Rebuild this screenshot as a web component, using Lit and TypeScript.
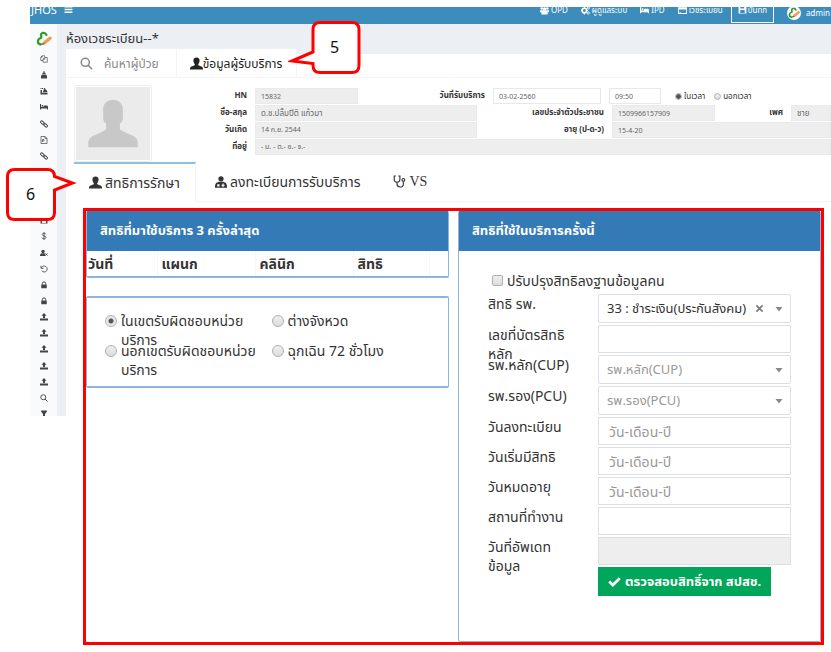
import { LitElement, html, css, svg, nothing } from "lit";
import { customElement, property } from "lit/decorators.js";

const glyphs: Record<string, unknown> = {
  user: svg`<path d="M8 .5c2.400 0 3.800 1.500 3.800 3.900 0 2-.8 3.500-1.700 4.400v.9c.6.8 2.600 1.300 4.100 2 1.400.6 1.800 1.200 1.800 3.800H0c0-2.600.4-3.200 1.800-3.800 1.500-.7 3.500-1.200 4.100-2v-.9C5 7.900 4.200 6.400 4.200 4.400 4.200 2 5.600.5 8 .5z"/>`,
  doctor: svg`<circle cx="8" cy="3.800" r="3.500"/><path fill-rule="evenodd" d="M5 7.500h6l3 1.500c1.500 1 2 3 2 6.500H0C0 12 .5 10 2 9zM3 11v3h3v-3zm7-1v1.500H8.500V13H10v1.500h1.500V13H13v-1.500h-1.500V10z"/>`,
  steth: svg`<path fill="none" stroke="currentColor" stroke-width="1.400" d="M3.500 1.200H1.500V5c0 2.500 1.500 4 3.500 4s3.500-1.500 3.500-4V1.200h-2M5 9v2.500c0 2 1.400 3.300 3.700 3.300s4-1.300 4-3.500V8"/><circle cx="12.700" cy="6" r="1.700" fill="none" stroke="currentColor" stroke-width="1.400"/>`,
  search: svg`<path fill="none" stroke="currentColor" stroke-width="2" stroke-linecap="round" d="M10.400 10.400l4 4"/><circle cx="6.500" cy="6.500" r="5" fill="none" stroke="currentColor" stroke-width="1.800"/>`,
  copy: svg`<path fill="none" stroke="currentColor" stroke-width="1.300" d="M9.500 4V1.500h-5l-3 3v6.500H6M4.500 1.500v3h-3M9.500 5h5v9.500H6V8.500zM9.500 5v3.500H6"/>`,
  nurse: svg`<path d="M7 0h2v3l2 1v2H5V4l2-1zM4 7h8l2 3v5H2v-5z"/>`,
  chair: svg`<path d="M1 2h2v2H1zM4 2h2v2H4zM1 6h3v6h11v3H1zM8 2h2l1 3 3 2 1 4H5l2-4z"/>`,
  bed: svg`<path d="M0 2h2v6h5V5h6c2 0 3 1 3 3v5h-2v-2H2v2H0z"/><circle cx="4.500" cy="5.800" r="1.600"/>`,
  link: svg`<g fill="none" stroke="currentColor" stroke-width="2"><rect x="1" y="3" width="8" height="4.500" rx="2.200" transform="rotate(40 5 5)"/><rect x="7" y="8.500" width="8" height="4.500" rx="2.200" transform="rotate(40 11 11)"/></g>`,
  file: svg`<path fill="none" stroke="currentColor" stroke-width="1.400" d="M2 1h8l4 4v10H2zM10 1v4h4M5 12V7h3v3H5"/>`,
  save: svg`<path fill-rule="evenodd" d="M1 1h11l3 3v11H1zm3 1v4h7V2zm0 7v5h8V9z"/>`,
  dollar: svg`<path fill="none" stroke="currentColor" stroke-width="1.600" d="M12 4.500C11.500 3 10 2.600 8 2.600c-2.200 0-3.600.9-3.600 2.500C4.400 8.700 12 7 12 10.800c0 1.700-1.600 2.700-4 2.700-2.300 0-3.700-.8-4.200-2.400M8 0v16"/>`,
  userx: svg`<circle cx="6" cy="5" r="3.500"/><path d="M0 14c0-4 1.500-5.500 3.500-5.500h5C10 8.500 11 10 11 14z"/><path fill="none" stroke="currentColor" stroke-width="2" d="M11 9l4 4m0-4l-4 4"/>`,
  undo: svg`<path fill="none" stroke="currentColor" stroke-width="1.700" d="M2 1.500v5h5M2.500 6C4 3 6 2 8.500 2a6 6 0 1 1-5 9.500"/>`,
  lock: svg`<path d="M2.500 7h11v7.500h-11z"/><path fill="none" stroke="currentColor" stroke-width="2" d="M4.700 7V5a3.300 3.300 0 0 1 6.600 0v2"/>`,
  upload: svg`<path d="M8 0l5 5.500H10V10H6V5.500H3zM0 11h16v4H0z"/>`,
  filter: svg`<path d="M2 1h12v2L10 8v7l-4-2.500V8L2 3z"/>`,
  bars: svg`<path d="M1 2h14v2.600H1zM1 6.700h14v2.600H1zM1 11.400h14V14H1z"/>`,
  group: svg`<circle cx="8" cy="5" r="3"/><circle cx="3" cy="4.500" r="2.300"/><circle cx="13" cy="4.500" r="2.300"/><path d="M0 7.500h16V11h-2.500v4h-11v-4H0z"/>`,
  gears: svg`<circle cx="6" cy="8" r="4" fill="none" stroke="currentColor" stroke-width="3"/><path d="M5 1h2v3H5zM5 12h2v3H5zM0 7h3v2H0zM9 7h3v2H9z"/><circle cx="13" cy="3.500" r="2" fill="none" stroke="currentColor" stroke-width="1.500"/><circle cx="13" cy="12.500" r="2" fill="none" stroke="currentColor" stroke-width="1.500"/>`,
  card: svg`<path fill-rule="evenodd" d="M0 2h16v12H0zm1.500 4v6.500h13V6zm1 4.500V12H5v-1.500z"/>`,
  check: svg`<path fill="none" stroke="currentColor" stroke-width="3.400" d="M1.500 8l4.500 4.300L14.500 4"/>`,
  times: svg`<path fill="none" stroke="currentColor" stroke-width="2.800" d="M2.500 2.500l11 11m0-11l-11 11"/>`,
  caret: svg`<path d="M1 4h14l-7 9z"/>`,
  logo: svg`<path fill="none" stroke="#2f9e23" stroke-width="2.200" stroke-linecap="round" d="M10.500 4C9 .8 4.500 1.500 5 4.600c.2 1.200.8 1.700 0 2.400C1.500 7.500.5 12.500 4.500 13.300"/><path fill="none" stroke="#f19b55" stroke-width="3.400" stroke-linecap="round" d="M8.500 11.800l5.500-4.600"/><path fill="none" stroke="#2f9e23" stroke-width="1.500" d="M4.500 13.500l4-1"/>`,
};

@customElement("ui-icon")
class UiIcon extends LitElement {
  @property() name = "";
  static styles = css`
    :host { display: inline-flex; flex: none; width: 1em; height: 1em; }
    svg { width: 100%; height: 100%; fill: currentColor; }
  `;
  render() {
    return html`<svg viewBox="0 0 16 16" aria-hidden="true">${glyphs[this.name]}</svg>`;
  }
}

interface Row {
  id: string;
  label: unknown;
  kind: "select" | "text" | "date" | "readonly";
  value?: string;
}

@customElement("app-root")
class AppRoot extends LitElement {
  static styles = css`
    * { box-sizing: border-box; }
    :host {
      display: block;
      position: relative;
      padding: 7px 0 7px 30px;
      background: #fff;
      color: #333;
      font: 14px/19px "Noto Sans", "Noto Sans Thai", sans-serif;
      overflow: hidden;
    }
    a { color: inherit; text-decoration: none; }
    button, input, select { font: inherit; color: inherit; margin: 0; }
    button { border: 0; background: none; padding: 0; }
    h1, h2 { margin: 0; font-size: inherit; font-weight: inherit; }

    .topbar {
      display: flex;
      align-items: flex-end;
      height: 17px;
      overflow: hidden;
      background: #3c8dbc;
      color: #fff;
      font-size: 8px;
      line-height: 14px;
      white-space: nowrap;
    }
    .brand { font-size: 11px; margin: 0 7px 7px 1px; }
    .menu { display: flex; font-size: 9px; margin-bottom: 10px; }
    .toplinks { display: flex; align-items: flex-end; margin-left: auto; }
    .toplinks a { display: flex; align-items: center; gap: 2px; padding-bottom: 7px; margin-right: 13px; }
    .toplinks ui-icon { font-size: 9px; }
    .toplinks .save {
      height: 24px;
      margin: 0 13px 1px -5px;
      padding: 0 6px 5px;
      border: 1px solid #fff;
      align-items: flex-end;
      display: flex;
      gap: 1px;
    }
    .toplinks .save ui-icon { margin-bottom: 3px; }
    .toplinks .account { margin-right: 1px; gap: 5px; padding-bottom: 4px; }
    .badge { display: flex; padding: 1px; border-radius: 50%; background: #fff; }
    .toplinks .badge ui-icon { font-size: 12px; }

    .body { display: grid; grid-template-columns: 27px 9px minmax(0, 1fr); grid-template-rows: 30px auto; }
    .rail { grid-row: 1 / 3; height: 392px; overflow: hidden; background: #f9fafc; color: #444; }
    .rail .home { display: flex; justify-content: center; padding-top: 7px; font-size: 16px; }
    .rail ul {
      list-style: none;
      margin: 4px 0 0;
      padding: 0;
      height: 371px;
      display: grid;
      grid-auto-rows: 1fr;
      justify-items: center;
      align-items: center;
      font-size: 8px;
    }
    .rail a { display: flex; }
    .heading { grid-column: 2 / 4; background: #ecf0f5; padding: 4px 9px; font-size: 13px; line-height: 20px; }
    .gutter { grid-column: 2; background: #ecf0f5; height: 362px; }
    .content { grid-column: 3; margin-top: -5px; min-width: 0; }

    .tabs { display: flex; border-bottom: 1px solid #f4f4f4; }
    .tabs button { display: flex; align-items: center; background: #fff; border-right: 1px solid #f4f4f4; height: 28px; font-size: 12px; white-space: nowrap; }
    .tabs .find { color: #888; padding: 0 17px 0 14px; gap: 11px; }
    .tabs .info { padding: 0 14px 0 13px; color: #222; }
    .tabs ui-icon { font-size: 13px; }

    .patient { display: flex; gap: 7px; padding: 7px 0 0 8px; }
    .photo { flex: none; width: 78px; height: 77px; padding: 1px; border: 1px solid #eee; border-radius: 2px; }
    .photo svg { display: block; width: 100%; height: 100%; background: #ebebeb; }
    .facts { flex: 1; display: grid; gap: 1px; align-content: start; padding-top: 3px; font-size: 8px; line-height: 14px; white-space: nowrap; }
    .line { display: grid; column-gap: 8px; height: 16px; }
    .visit { grid-template-columns: 88fr 103fr 119fr 108fr 52fr 162fr; }
    .person { grid-template-columns: 88fr 222fr 119fr 103fr 60fr 40fr; }
    .birth { grid-template-columns: 88fr 222fr 119fr 219fr; }
    .home-line { grid-template-columns: 88fr 576fr; }
    .line > label { font-weight: 700; text-align: right; }
    .line > input { width: 100%; min-width: 0; height: 16px; padding: 0 5px; border: 1px solid #e6e8ec; color: #666; outline: 0; }
    .line > input[readonly] { background: #eee; border-color: #e9eaec; }
    .line > .num { font-size: 7px; }
    .when { display: flex; gap: 9px; align-items: center; padding-left: 6px; }
    .when label { display: flex; gap: 2px; align-items: center; }

    .tick { appearance: none; flex: none; width: 12px; height: 12px; border: 1px solid #b0b0b0; background: linear-gradient(#eee, #ddd); }
    .tick[type="radio"] { border-radius: 50%; }
    .tick[type="radio"]:checked { background: radial-gradient(circle, #555 0 2px, #e8e8e8 3px); }
    .tick[type="checkbox"] { border-radius: 2px; width: 11px; height: 11px; }
    .when .tick { width: 7px; height: 7px; }

    .subtabs { display: flex; margin-left: 8px; }
    .subtabs button { display: flex; align-items: center; gap: 3px; height: 40px; border-bottom: 1px solid #f4f4f4; white-space: nowrap; }
    .subtabs .rights { border-top: 2px solid #8fc0dc; border-right: 1px solid #f4f4f4; border-bottom-color: #fff; padding: 0 15px; }
    .subtabs .register { padding: 0 17px 0 19px; }
    .subtabs .register ui-icon { font-size: 12px; }
    .subtabs .vitals { flex: 1; padding-left: 16px; font-family: "Liberation Serif", serif; }
    .subtabs ui-icon { font-size: 13px; }

    .frame { margin: 6px 7px 0 17px; border: 3px solid #f00; display: grid; grid-template-columns: minmax(0, 1fr) minmax(0, 1fr); gap: 9px; }
    .panel { border: 1px solid #8db5db; border-top-width: 0; border-radius: 2px; }
    .panel h2 { height: 40px; padding: 9px 13px; background: #337ab7; color: #fff; font-weight: 700; font-size: 13px; line-height: 20px; white-space: nowrap; }
    .recent { border-bottom-width: 2px; }
    .recent table { width: 100%; border-collapse: collapse; table-layout: fixed; }
    .recent th { height: 25px; padding: 0 4px 0 1px; text-align: left; font-weight: 700; font-size: 14px; line-height: 22px; }
    .recent th + th { padding-left: 4px; border-left: 1px solid #f6f6f6; }
    .w-date { width: 70px; }
    .w-right { width: 76px; }
    .w-end { width: 19px; }
    .zone { margin: 18px 0 0; padding: 13px 10px 0 18px; height: 92px; border-width: 2px 1px; display: grid; grid-template-columns: 1fr 1fr; grid-auto-rows: 30px; }
    .zone label { display: flex; gap: 4px; align-items: flex-start; white-space: nowrap; }
    .zone .tick { margin-top: 4px; }

    .current .fields { padding: 19px 29px 45px; }
    .update { display: flex; gap: 4px; align-items: center; height: 20px; margin: 0 0 4px 4px; white-space: nowrap; }
    .field { display: grid; grid-template-columns: 110px minmax(0, 1fr); grid-template-rows: 100%; margin-bottom: 2px; height: 28px; }
    .field.select { height: 29px; }
    .field > label { white-space: nowrap; }
    .box { position: relative; }
    .box input, .box select { display: block; appearance: none; width: 100%; height: 100%; padding: 0 10px; border: 1px solid #dcdfe6; background: #fff; outline: 0; border-radius: 0; }
    .box select { padding: 0 8px; border-radius: 2px; font-size: 13px; }
    .box .empty { color: #999; }
    .box input::placeholder { color: #999; opacity: 1; }
    .box input[readonly] { background: #eee; }
    .arrow { position: absolute; right: 8px; top: 11px; font-size: 8px; color: #888; pointer-events: none; }
    .clear { position: absolute; right: 27px; top: 10px; display: flex; font-size: 9px; color: #777; }
    .verify { display: flex; align-items: center; gap: 4px; margin-left: 110px; height: 29px; padding: 0 10px; background: #00a65a; color: #fff; font-weight: 700; font-size: 13px; white-space: nowrap; }

    .callout { position: absolute; font-size: 16px; line-height: 22px; color: #111; }
    .callout svg { display: block; fill: #fff; stroke: #f00; stroke-width: 3; }
    .callout span { position: absolute; top: 16px; }
    .five { left: 288px; top: 20px; }
    .five span { left: 42px; }
    .six { left: 5px; top: 167px; }
    .six span { left: 21px; }
  `;

  private rail = ["copy", "nurse", "chair", "bed", "link", "file", "link", "file", "card", "save", "save", "dollar", "userx", "undo", "lock", "lock", "upload", "upload", "upload", "upload", "upload", "search", "filter"];

  private rows: Row[] = [
    { id: "hosp", label: "สิทธิ รพ.", kind: "select", value: "33 : ชำระเงิน(ประกันสังคม)" },
    { id: "card", label: html`เลขที่บัตรสิทธิ<br />หลัก`, kind: "text" },
    { id: "cup", label: "รพ.หลัก(CUP)", kind: "select" },
    { id: "pcu", label: "รพ.รอง(PCU)", kind: "select" },
    { id: "reg", label: "วันลงทะเบียน", kind: "date" },
    { id: "start", label: "วันเริ่มมีสิทธิ", kind: "date" },
    { id: "end", label: "วันหมดอายุ", kind: "date" },
    { id: "work", label: "สถานที่ทำงาน", kind: "text" },
    { id: "upd", label: html`วันที่อัพเดท<br />ข้อมูล`, kind: "readonly" },
  ];

  private control(r: Row) {
    if (r.kind === "select") {
      return html`<select id=${r.id} class=${r.value ? "" : "empty"}><option>${r.value ?? r.label}</option></select>
        ${r.value ? html`<button class="clear" aria-label="ล้าง"><ui-icon name="times"></ui-icon></button>` : nothing}
        <ui-icon class="arrow" name="caret"></ui-icon>`;
    }
    return html`<input id=${r.id} type="text" placeholder=${r.kind === "date" ? "วัน-เดือน-ปี" : ""} ?readonly=${r.kind === "readonly"} />`;
  }

  private zone(label: unknown, checked = false) {
    return html`<label><input class="tick" type="radio" name="zone" ?checked=${checked} /><span>${label}</span></label>`;
  }

  render() {
    return html`
      <header class="topbar">
        <a class="brand" href="#">JHOS</a>
        <button class="menu" aria-label="เมนู"><ui-icon name="bars"></ui-icon></button>
        <nav class="toplinks">
          <a href="#"><ui-icon name="group"></ui-icon>OPD</a>
          <a href="#"><ui-icon name="gears"></ui-icon>ผู้ดูแลระบบ</a>
          <a href="#"><ui-icon name="bed"></ui-icon>IPD</a>
          <a href="#"><ui-icon name="card"></ui-icon>เวชระเบียน</a>
          <button class="save"><ui-icon name="save"></ui-icon>บันทึก</button>
          <a class="account" href="#"><span class="badge"><ui-icon name="logo"></ui-icon></span>admin</a>
        </nav>
      </header>
      <div class="body">
        <nav class="rail">
          <a class="home" href="#"><ui-icon name="logo"></ui-icon></a>
          <ul>${this.rail.map((n) => html`<li><a href="#"><ui-icon name=${n}></ui-icon></a></li>`)}</ul>
        </nav>
        <h1 class="heading">ห้องเวชระเบียน--*</h1>
        <div class="gutter"></div>
        <main class="content">
          <div class="tabs">
            <button class="find"><ui-icon name="search"></ui-icon>ค้นหาผู้ป่วย</button>
            <button class="info"><ui-icon name="user"></ui-icon>ข้อมูลผู้รับบริการ</button>
          </div>
          <section class="patient">
            <div class="photo">
              <svg viewBox="0 0 74 74"><path fill="#c8c8c8" d="M27 23c0-6 4-10 10-10s10 4 10 10v8c0 3-1 5-3 6v6c3 2 8 4 12 6 5 2 6 5 6 8v4H12v-4c0-3 1-6 6-8 4-2 9-4 12-6v-6c-2-1-3-3-3-6z" /></svg>
            </div>
            <div class="facts">
              <div class="line visit">
                <label for="hn">HN</label><input id="hn" class="num" readonly value="15832" />
                <label for="date">วันที่รับบริการ</label><input id="date" class="num" value="03-02-2560" />
                <input class="num" aria-label="เวลา" value="09:50" />
                <div class="when">
                  <label><input class="tick" type="radio" name="when" checked />ในเวลา</label>
                  <label><input class="tick" type="radio" name="when" />นอกเวลา</label>
                </div>
              </div>
              <div class="line person">
                <label for="name">ชื่อ-สกุล</label><input id="name" readonly value="ด.ช.ปลื้มปีติ แก้วมา" />
                <label for="cid">เลขประจำตัวประชาชน</label><input id="cid" class="num" readonly value="1509966157909" />
                <label for="sex">เพศ</label><input id="sex" readonly value="ชาย" />
              </div>
              <div class="line birth">
                <label for="dob">วันเกิด</label><input id="dob" class="num" readonly value="14 ก.ย. 2544" />
                <label for="age">อายุ (ป-ด-ว)</label><input id="age" class="num" readonly value="15-4-20" />
              </div>
              <div class="line home-line">
                <label for="addr">ที่อยู่</label><input id="addr" class="num" readonly value="- ม. - ต.- อ.- จ.-" />
              </div>
            </div>
          </section>
          <div class="subtabs">
            <button class="rights"><ui-icon name="user"></ui-icon>สิทธิการรักษา</button>
            <button class="register"><ui-icon name="doctor"></ui-icon>ลงทะเบียนการรับบริการ</button>
            <button class="vitals"><ui-icon name="steth"></ui-icon>VS</button>
          </div>
          <div class="frame">
            <div>
              <section class="panel recent">
                <h2>สิทธิที่มาใช้บริการ 3 ครั้งล่าสุด</h2>
                <table>
                  <thead><tr><th class="w-date">วันที่</th><th>แผนก</th><th>คลินิก</th><th class="w-right">สิทธิ</th><th class="w-end"></th></tr></thead>
                </table>
              </section>
              <section class="panel zone">
                ${this.zone(html`ในเขตรับผิดชอบหน่วย<br />บริการ`, true)}
                ${this.zone("ต่างจังหวด")}
                ${this.zone(html`นอกเขตรับผิดชอบหน่วย<br />บริการ`)}
                ${this.zone("ฉุกเฉิน 72 ชั่วโมง")}
              </section>
            </div>
            <section class="panel current">
              <h2>สิทธิที่ใช้ในบริการครั้งนี้</h2>
              <div class="fields">
                <label class="update"><input class="tick" type="checkbox" />ปรับปรุงสิทธิลงฐานข้อมูลคน</label>
                ${this.rows.map((r) => html`<div class="field ${r.kind}"><label for=${r.id}>${r.label}</label><div class="box">${this.control(r)}</div></div>`)}
                <button class="verify"><ui-icon name="check"></ui-icon>ตรวจสอบสิทธิ์จาก สปสช.</button>
              </div>
            </section>
          </div>
        </main>
      </div>
      <div class="callout five">
        <svg width="74" height="56" viewBox="0 0 74 56"><path d="M32 2.500h32q7 0 7 7v36q0 7-7 7H32q-7 0-7-7v-2L4 41l21-9V9.500q0-7 7-7z" /></svg>
        <span>5</span>
      </div>
      <div class="callout six">
        <svg width="72" height="56" viewBox="0 0 72 56"><path d="M9.500 2.500h33q7 0 7 7l18 6.500-18 7v22.500q0 7-7 7h-33q-7 0-7-7v-36q0-7 7-7z" /></svg>
        <span>6</span>
      </div>
    `;
  }
}
